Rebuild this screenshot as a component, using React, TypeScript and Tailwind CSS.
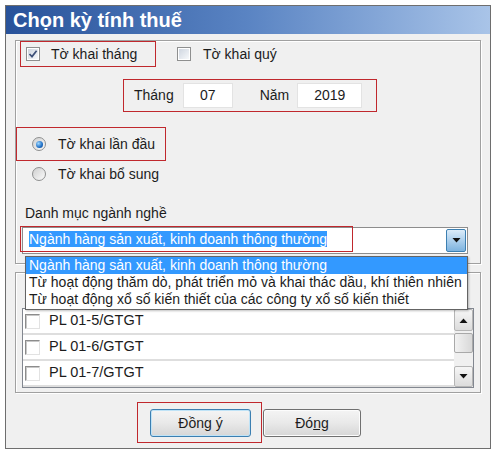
import React from "react"

function CheckBox({ checked }: { checked?: boolean }) {
  return (
    <span className="flex h-[14px] w-[14px] shrink-0 items-center justify-center border border-[#8e8f8f] bg-white">
      <span className="flex h-[10px] w-[10px] items-center justify-center bg-gradient-to-br from-[#cfd6e0] to-[#f7f9fb]">
        {checked && (
          <svg width="10" height="10" viewBox="0 0 10 10">
            <path d="M1.5 5 L4 7.6 L8.6 1.8" fill="none" stroke="#3d5079" strokeWidth="1.7" />
          </svg>
        )}
      </span>
    </span>
  )
}

function Radio({ checked }: { checked?: boolean }) {
  return (
    <span className="flex h-[14px] w-[14px] shrink-0 items-center justify-center rounded-full border border-[#8e8f8f] bg-gradient-to-br from-[#cfcfcf] to-[#fbfbfb]">
      {checked && (
        <span className="h-[7px] w-[7px] rounded-full bg-[radial-gradient(circle_at_35%_35%,#9fd8ff,#1f6fc6_60%,#0c3b7e)]" />
      )}
    </span>
  )
}

function ListCheck() {
  return (
    <span className="h-[15px] w-[15px] shrink-0 border border-b-[#e2e2e2] border-l-[#8c8c8c] border-r-[#e2e2e2] border-t-[#8c8c8c] bg-white shadow-[inset_1px_1px_0_#c8c8c8]" />
  )
}

function Arrow({ up }: { up?: boolean }) {
  return (
    <svg width="9" height="5" viewBox="0 0 9 5">
      <path d={up ? "M0.5 5 L4.5 0.5 L8.5 5 Z" : "M0.5 0 L4.5 4.5 L8.5 0 Z"} fill="#111" />
    </svg>
  )
}

const rows = ["PL 01-5/GTGT", "PL 01-6/GTGT", "PL 01-7/GTGT"]

export default function App() {
  return (
    <div className="h-[456px] w-[496px] bg-white pl-[5px] pt-[5px] font-['Liberation_Sans',Arial,sans-serif] text-[14px] text-[#1c1c1c]">
      <div className="flex h-[444px] w-[486px] flex-col border border-[#6e6e6e]">
        <div className="flex h-[28px] items-center bg-gradient-to-r from-[#28529a] via-[#5a84c3] to-[#a9c4e8] pl-[7px] text-[20px] font-bold text-white">
          Chọn kỳ tính thuế
        </div>

        <div className="relative flex-1 bg-[#f0f0f0] pl-[9px] pt-[6px]">
          {/* nhóm 1 */}
          <div className="h-[224px] w-[466px] border border-[#a0a0a0] shadow-[inset_1px_1px_0_#fff,1px_1px_0_#fff]">
            <div className="flex items-center">
              <div className="ml-[4px] flex h-[26px] w-[136px] items-center border border-[#c0282d] pl-[5px]">
                <CheckBox checked />
                <span className="ml-[11px]">Tờ khai tháng</span>
              </div>
              <div className="ml-[21px]">
                <CheckBox />
              </div>
              <span className="ml-[12px]">Tờ khai quý</span>
            </div>

            <div className="ml-[107px] mt-[12px] flex h-[33px] w-[254px] items-center border border-[#c0282d] pl-[10px]">
              <span>Tháng</span>
              <div className="ml-[9px] flex h-[25px] w-[50px] items-center justify-center border border-[#e3e3e3] bg-white">07</div>
              <span className="ml-[27px]">Năm</span>
              <div className="ml-[8px] flex h-[25px] w-[65px] items-center justify-center border border-[#e3e3e3] bg-white">2019</div>
            </div>

            <div className="mt-[15px] flex h-[34px] w-[150px] items-center border border-[#c0282d] pl-[15px]">
              <Radio checked />
              <span className="ml-[12px]">Tờ khai lần đầu</span>
            </div>
            <div className="mt-[5px] flex h-[16px] items-center pl-[16px]">
              <Radio />
              <span className="ml-[12px]">Tờ khai bổ sung</span>
            </div>

            <div className="ml-[9px] mt-[23px] h-[16px] leading-[16px]">Danh mục ngành nghề</div>

            <div className="ml-[6px] mt-[6px] flex h-[27px] w-[446px] items-start border border-[#8d8d8d] bg-white">
              <div className="-ml-[3px] -mt-[2px] flex h-[26px] w-[333px] items-center border border-[#c0282d] pl-[8px]">
                <span className="bg-[#3399ff] leading-[16px] text-white">Ngành hàng sản xuất, kinh doanh thông thường</span>
              </div>
              <div className="ml-auto mr-[1px] mt-[1px] flex h-[23px] w-[20px] items-center justify-center rounded-[2px] border border-[#3c7fb1] bg-gradient-to-b from-[#dcecf9] to-[#7db3df]">
                <Arrow />
              </div>
            </div>
          </div>

          {/* nhóm 2 */}
          <div className="mt-[8px] h-[121px] w-[466px] border border-[#a0a0a0] pl-[6px] pt-[35px] shadow-[inset_1px_1px_0_#fff,1px_1px_0_#fff]">
            <div className="flex h-[80px] w-[452px] border border-[#828790] bg-white">
              <div className="flex-1 overflow-hidden">
                {rows.map(r => (
                  <div key={r} className="flex h-[26px] items-center border-b-2 border-[#dedede] pl-[2px]">
                    <ListCheck />
                    <span className="ml-[9px] text-[14.5px]">{r}</span>
                  </div>
                ))}
              </div>
              <div className="flex w-[19px] flex-col bg-[#f0f0f0]">
                <div className="flex h-[22px] items-center justify-center rounded-[2px] border border-[#b5b5b5] bg-gradient-to-b from-[#f6f6f6] to-[#dcdcdc]">
                  <Arrow up />
                </div>
                <div className="mt-[2px] h-[20px] rounded-[2px] border border-[#a9a9a9] bg-gradient-to-r from-[#f2f2f2] to-[#d8d8d8]" />
                <div className="mt-auto flex h-[21px] items-center justify-center rounded-[2px] border border-[#b5b5b5] bg-gradient-to-b from-[#f6f6f6] to-[#dcdcdc]">
                  <Arrow />
                </div>
              </div>
            </div>
          </div>

          {/* nút */}
          <div className="ml-[122px] mt-[9px] flex items-start">
            <div className="h-[41px] w-[125px] border border-[#c0282d] pl-[12px] pt-[6px]">
              <button className="flex h-[28px] w-[101px] items-center justify-center rounded-[3px] border border-[#3c7fb1] bg-gradient-to-b from-[#f4f4f4] via-[#e9e9e9] to-[#d6d6d6] shadow-[inset_0_0_0_1px_#bfe3f7]">
                Đồn<span className="underline">g</span>&nbsp;ý
              </button>
            </div>
            <button className="ml-[1px] mt-[7px] flex h-[28px] w-[98px] items-center justify-center rounded-[3px] border border-[#707070] bg-gradient-to-b from-[#f4f4f4] via-[#e9e9e9] to-[#d6d6d6] shadow-[inset_0_0_0_1px_#fcfcfc]">
              Đó<span className="underline">ng</span>
            </button>
          </div>

          {/* danh sách thả xuống */}
          <div className="absolute left-[19px] top-[222px] h-[54px] w-[443px] border border-[#646464] bg-white shadow-[1px_1px_2px_rgba(0,0,0,0.25)]">
            <div className="h-[17px] bg-[#3399ff] pl-[3px] leading-[17px] text-white">Ngành hàng sản xuất, kinh doanh thông thường</div>
            <div className="h-[17px] whitespace-nowrap pl-[3px] leading-[17px]">Từ hoạt động thăm dò, phát triển mỏ và khai thác dầu, khí thiên nhiên</div>
            <div className="h-[17px] whitespace-nowrap pl-[3px] leading-[17px]">Từ hoạt động xổ số kiến thiết của các công ty xổ số kiến thiết</div>
          </div>
        </div>
      </div>
    </div>
  )
}
